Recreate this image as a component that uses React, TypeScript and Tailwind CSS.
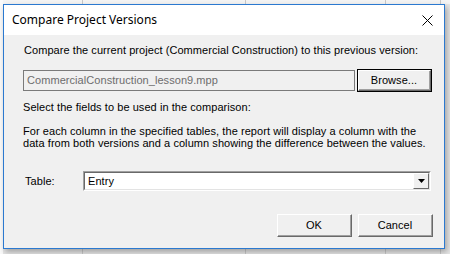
import React from "react";

const sans = "font-['Liberation_Sans',Arial,sans-serif]";

function Btn3d({ label, def, className }: { label: string; def?: boolean; className?: string }) {
  return (
    <div className={`${def ? "border border-black" : ""} ${className ?? ""}`}>
      <div className="h-full w-full border-t border-l border-t-white border-l-white border-r border-b border-r-[#696969] border-b-[#696969] bg-[#f0f0f0]">
        <div className="flex h-full w-full items-center justify-center border-r border-b border-r-[#a0a0a0] border-b-[#a0a0a0] text-[11px] text-black">
          {label}
        </div>
      </div>
    </div>
  );
}

export default function App() {
  return (
    <div className={`relative h-[254px] w-[450px] overflow-hidden bg-[#e6e6e6] ${sans}`}>
      {/* backdrop app strips */}
      <div className="absolute left-0 top-0 h-[4px] w-full bg-[#f4f4f4]" />
      <div className="absolute left-0 top-0 h-full w-[3px] bg-[#fafafa]" />
      <div className="absolute left-[82px] top-0 h-full w-px bg-[#c8c8c8]" />
      <div className="absolute left-[245px] top-0 h-full w-px bg-[#c8c8c8]" />
      <div className="absolute left-[385px] top-0 h-full w-px bg-[#c8c8c8]" />
      <div className="absolute left-[440px] top-0 h-full w-px bg-[#c8c8c8]" />

      <div className="relative ml-[3px] mt-[4px] flex h-[245px] w-[442px] flex-col border border-[#2b79d0] bg-[#f0f0f0] shadow-[2px_3px_6px_rgba(0,0,0,0.3)]">
        <div className="flex h-[30px] shrink-0 items-center justify-between bg-white pl-[8px] pr-[10px]">
          <span className="font-['Noto_Sans',sans-serif] text-[12px] text-black">Compare Project Versions</span>
          <svg width="11" height="11" viewBox="0 0 11 11" className="mr-[1px]">
            <path d="M0.5 0.5 L10.5 10.5 M10.5 0.5 L0.5 10.5" stroke="#000" strokeWidth="1" />
          </svg>
        </div>

        <div className="flex flex-1 flex-col pl-[19px] text-[11px] tracking-[0.06px] text-black">
          <p className="ml-[1px] mt-[9px] leading-[13px]">
            Compare the current project (Commercial Construction) to this previous version:
          </p>
          <div className="mt-[12px] flex items-center">
            <div className="flex h-[21px] w-[332px] items-center border border-[#7a7a7a] bg-[#f0f0f0] pl-[3px] text-[#6d6d6d]">
              CommercialConstruction_lesson9.mpp
            </div>
            <Btn3d label="Browse..." def className="ml-[2px] h-[23px] w-[75px]" />
          </div>
          <p className="mt-[9px] leading-[13px]">Select the fields to be used in the comparison:</p>
          <p className="mt-[11px] leading-[12px]">
            For each column in the specified tables, the report will display a column with the
            <br />
            data from both versions and a column showing the difference between the values.
          </p>
          <div className="mt-[22px] flex items-center">
            <span className="w-[60px] pl-[2px]">Table:</span>
            <div className="flex h-[20px] w-[348px] border-t border-l border-t-[#a0a0a0] border-l-[#a0a0a0] border-b border-r border-b-white border-r-white">
              <div className="flex flex-1 items-center border-t border-l border-t-[#696969] border-l-[#696969] border-b border-r border-b-[#e3e3e3] border-r-[#e3e3e3] bg-white">
                <span className="flex-1 pl-[3px]">Entry</span>
                <div className="flex h-[16px] w-[16px] items-center justify-center border-t border-l border-t-white border-l-white border-r border-b border-r-[#696969] border-b-[#696969] bg-[#f0f0f0]">
                  <svg width="7" height="4" viewBox="0 0 7 4">
                    <path d="M0 0 H7 L3.5 4 Z" fill="#000" />
                  </svg>
                </div>
              </div>
            </div>
          </div>
          <div className="mt-[23px] flex justify-end pr-[11px]">
            <Btn3d label="OK" className="h-[23px] w-[75px]" />
            <Btn3d label="Cancel" className="ml-[6px] h-[23px] w-[75px]" />
          </div>
        </div>
      </div>
    </div>
  );
}
